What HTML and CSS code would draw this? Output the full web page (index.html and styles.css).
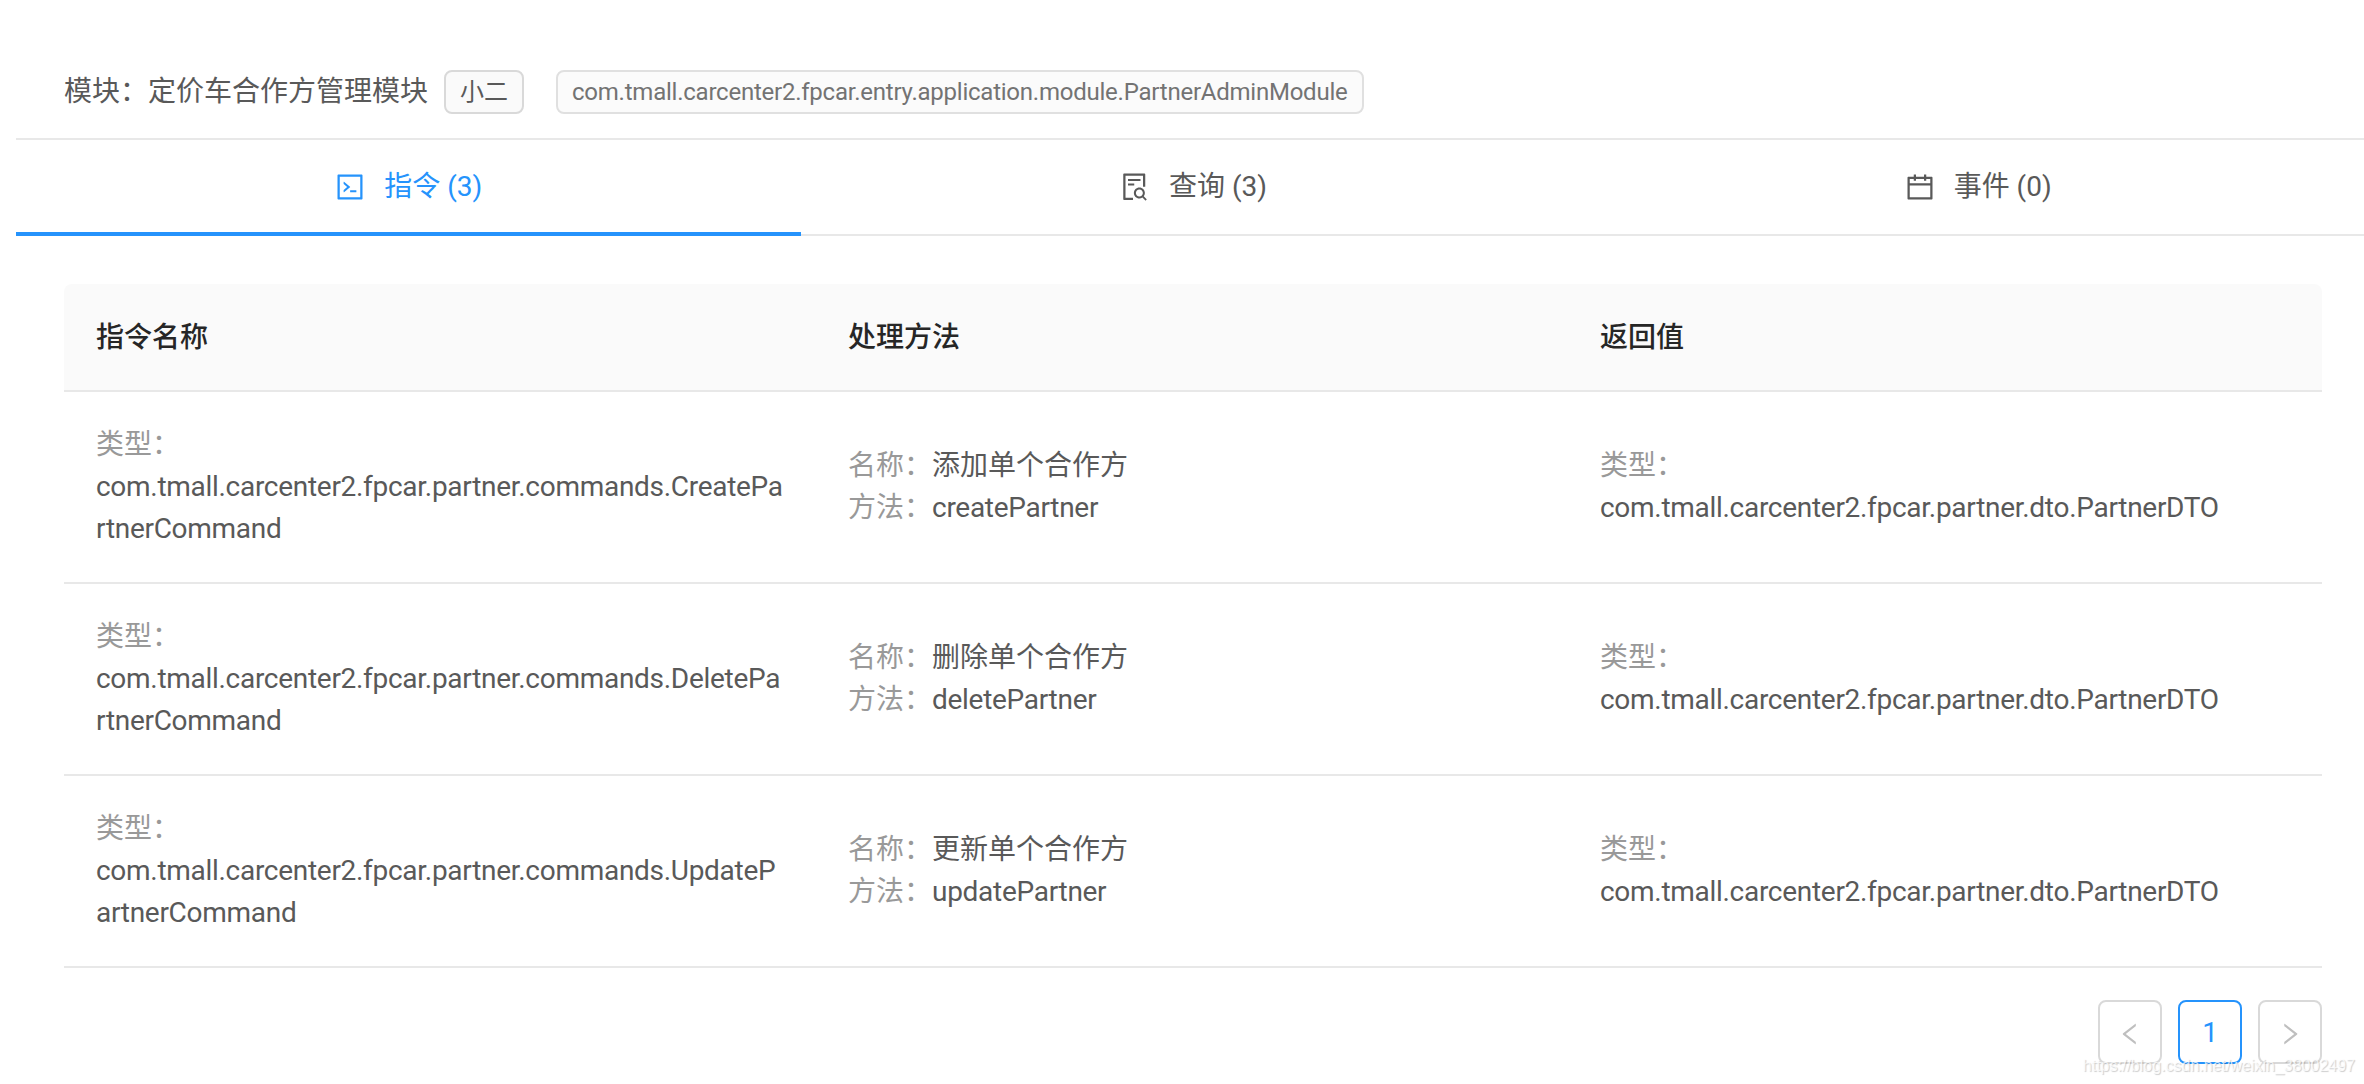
FILE: index.html
```html
<!DOCTYPE html>
<html lang="zh-CN">
<head>
  <meta charset="UTF-8" />
  <meta name="viewport" content="width=device-width, initial-scale=1.0" />
  <title>定价车合作方管理模块</title>
  <link rel="stylesheet" href="styles.css">
</head>
<body>

  <div class="module">
    <div class="module-head">
      <span class="module-title">模块：定价车合作方管理模块</span>
      <span class="tag">小二</span>
      <span class="tag tag-class">com.tmall.carcenter2.fpcar.entry.application.module.PartnerAdminModule</span>
    </div>

    <div class="tabs">
      <div class="tab active">
        <svg class="icon" viewBox="0 0 1024 1024"><path d="M516 673c0 4.4 3.4 8 7.5 8h185c4.1 0 7.5-3.6 7.5-8v-48c0-4.4-3.4-8-7.5-8h-185c-4.1 0-7.5 3.6-7.5 8v48zm-194.9 6.1l192-161c3.8-3.2 3.8-9.1 0-12.3l-192-160.9A7.95 7.95 0 0 0 308 351v62.7c0 2.4 1 4.6 2.9 6.1L420.7 512l-109.8 92.2a8.1 8.1 0 0 0-2.9 6.1V673c0 6.8 7.9 10.5 13.1 6.1zM880 112H144c-17.7 0-32 14.3-32 32v736c0 17.7 14.3 32 32 32h736c17.7 0 32-14.3 32-32V144c0-17.7-14.3-32-32-32zm-40 728H184V184h656v656z"/></svg>
        <span>指令 (3)</span>
      </div>
      <div class="tab">
        <svg class="icon" viewBox="0 0 1024 1024"><path d="M688 312v-48c0-4.4-3.6-8-8-8H296c-4.4 0-8 3.6-8 8v48c0 4.4 3.6 8 8 8h384c4.4 0 8-3.6 8-8zm-392 88c-4.4 0-8 3.6-8 8v48c0 4.4 3.6 8 8 8h184c4.4 0 8-3.6 8-8v-48c0-4.4-3.6-8-8-8H296zm144 452H208V148h560v344c0 4.4 3.6 8 8 8h56c4.4 0 8-3.6 8-8V108c0-17.7-14.3-32-32-32H168c-17.7 0-32 14.3-32 32v784c0 17.7 14.3 32 32 32h272c4.4 0 8-3.6 8-8v-56c0-4.4-3.6-8-8-8zm445.7 51.5l-93.3-93.3C814.7 780.7 828 743.9 828 704c0-97.2-78.8-176-176-176s-176 78.8-176 176 78.8 176 176 176c35.8 0 69-10.7 96.8-29l94.7 94.7c1.6 1.6 3.6 2.3 5.6 2.3s4.1-.8 5.6-2.3l31-31a7.9 7.9 0 0 0 0-11.2zM652 816c-61.9 0-112-50.1-112-112s50.1-112 112-112 112 50.1 112 112-50.1 112-112 112z"/></svg>
        <span>查询 (3)</span>
      </div>
      <div class="tab">
        <svg class="icon" viewBox="0 0 1024 1024"><path d="M880 184H712v-64c0-4.4-3.6-8-8-8h-56c-4.4 0-8 3.6-8 8v64H384v-64c0-4.4-3.6-8-8-8h-56c-4.4 0-8 3.6-8 8v64H144c-17.7 0-32 14.3-32 32v664c0 17.7 14.3 32 32 32h736c17.7 0 32-14.3 32-32V216c0-17.7-14.3-32-32-32zm-40 656H184V460h656v380zM184 392V256h128v48c0 4.4 3.6 8 8 8h56c4.4 0 8-3.6 8-8v-48h256v48c0 4.4 3.6 8 8 8h56c4.4 0 8-3.6 8-8v-48h128v136H184z"/></svg>
        <span>事件 (0)</span>
      </div>
    </div>

    <div class="content">
      <table class="table">
        <thead>
          <tr>
            <th>指令名称</th>
            <th>处理方法</th>
            <th>返回值</th>
          </tr>
        </thead>
        <tbody>
          <tr>
            <td>
              <div class="label">类型：</div>
              <div class="name">com.tmall.carcenter2.fpcar.partner.commands.CreatePartnerCommand</div>
            </td>
            <td>
              <div><span class="label">名称：</span>添加单个合作方</div>
              <div><span class="label">方法：</span><span class="name">createPartner</span></div>
            </td>
            <td>
              <div class="label">类型：</div>
              <div class="name">com.tmall.carcenter2.fpcar.partner.dto.PartnerDTO</div>
            </td>
          </tr>
          <tr>
            <td>
              <div class="label">类型：</div>
              <div class="name">com.tmall.carcenter2.fpcar.partner.commands.DeletePartnerCommand</div>
            </td>
            <td>
              <div><span class="label">名称：</span>删除单个合作方</div>
              <div><span class="label">方法：</span><span class="name">deletePartner</span></div>
            </td>
            <td>
              <div class="label">类型：</div>
              <div class="name">com.tmall.carcenter2.fpcar.partner.dto.PartnerDTO</div>
            </td>
          </tr>
          <tr>
            <td>
              <div class="label">类型：</div>
              <div class="name">com.tmall.carcenter2.fpcar.partner.commands.UpdatePartnerCommand</div>
            </td>
            <td>
              <div><span class="label">名称：</span>更新单个合作方</div>
              <div><span class="label">方法：</span><span class="name">updatePartner</span></div>
            </td>
            <td>
              <div class="label">类型：</div>
              <div class="name">com.tmall.carcenter2.fpcar.partner.dto.PartnerDTO</div>
            </td>
          </tr>
        </tbody>
      </table>

      <div class="pagination">
        <div class="page disabled">
          <svg class="arrow" viewBox="0 0 1024 1024"><path d="M724 218.3V141c0-6.7-7.7-10.4-12.9-6.3L260.3 486.8a31.86 31.86 0 0 0 0 50.3l450.8 352.1c5.3 4.1 12.9.4 12.9-6.3v-77.3c0-4.9-2.3-9.6-6.1-12.6l-360-281 360-281.1c3.8-3 6.1-7.7 6.1-12.6z"/></svg>
        </div>
        <div class="page current">1</div>
        <div class="page disabled">
          <svg class="arrow" viewBox="0 0 1024 1024"><path d="M765.7 486.8L314.9 134.7A7.97 7.97 0 0 0 302 141v77.3c0 4.9 2.3 9.6 6.1 12.6l360 281.1-360 281.1c-3.9 3-6.1 7.7-6.1 12.6V883c0 6.7 7.7 10.4 12.9 6.3l450.8-352.1a31.96 31.96 0 0 0 0-50.4z"/></svg>
        </div>
      </div>
    </div>
  </div>

  <div class="watermark">https://blog.csdn.net/weixin_38002497</div>

</body>
</html>
```

FILE: styles.css
```css
* {
  box-sizing: border-box;
}

body {
  margin: 0;
  height: 1084px;
  overflow: hidden;
  position: relative;
  background-color: #fff;
  color: #595959;
  font-family: Roboto, "Noto Sans CJK SC", sans-serif;
  font-size: 28px;
  line-height: 42px;
}

.module {
  width: 2354px;
  margin-left: 16px;
}

.module-head {
  display: flex;
  align-items: center;
  height: 140px;
  padding: 46px 48px 0;
  border-bottom: 2px solid #e8e8e8;
}

.module-title {
  margin-right: 16px;
}

.tag {
  height: 44px;
  padding: 0 14px;
  margin-right: 32px;
  border: 2px solid #d9d9d9;
  border-radius: 8px;
  background-color: #fafafa;
  font-size: 24px;
  line-height: 40px;
  white-space: nowrap;
}

.tag-class {
  border-color: #e0e0e0;
  background-color: #fbfbfb;
  color: #737373;
  letter-spacing: -0.235px;
}

.tabs {
  display: flex;
  height: 96px;
}

.tab {
  flex: 1;
  display: flex;
  align-items: center;
  justify-content: center;
  gap: 18px;
  border-bottom: 2px solid #e8e8e8;
}

.tab.active {
  padding-top: 2px;
  color: #2593fc;
  border-bottom: 4px solid #2593fc;
}

.icon {
  width: 32px;
  height: 32px;
  fill: currentColor;
}

.content {
  width: 2258px;
  margin: 48px 0 0 48px;
}

.table {
  width: 100%;
  table-layout: fixed;
  border-collapse: separate;
  border-spacing: 0;
}

.table th {
  width: 752px;
  padding: 33px 32px 31px;
  background-color: #fafafa;
  border-bottom: 2px solid #e8e8e8;
  color: #262626;
  font-weight: 500;
  text-align: left;
}

.table th:first-child {
  border-top-left-radius: 8px;
}

.table th:last-child {
  width: auto;
  border-top-right-radius: 8px;
}

.table td {
  padding: 32px;
  border-bottom: 2px solid #e8e8e8;
  vertical-align: middle;
  word-break: break-all;
}

.label {
  color: #999;
}

.name {
  letter-spacing: -0.29px;
}

.pagination {
  display: flex;
  justify-content: flex-end;
  gap: 16px;
  margin-top: 32px;
}

.page {
  display: flex;
  align-items: center;
  justify-content: center;
  width: 64px;
  height: 64px;
  border: 2px solid #d9d9d9;
  border-radius: 8px;
}

.page.current {
  padding-top: 1px;
  color: #2593fc;
  border-color: #2593fc;
}

.page.disabled {
  color: #bfbfbf;
}

.arrow {
  width: 28px;
  height: 28px;
  margin-top: 4px;
  fill: currentColor;
}

.watermark {
  position: absolute;
  right: 9px;
  bottom: 3px;
  color: rgba(255, 255, 255, 0.75);
  font-family: "Liberation Sans", Arial, sans-serif;
  font-size: 16px;
  line-height: 30px;
  text-shadow: 1px 1px 1px rgba(0, 0, 0, 0.2);
}
```
